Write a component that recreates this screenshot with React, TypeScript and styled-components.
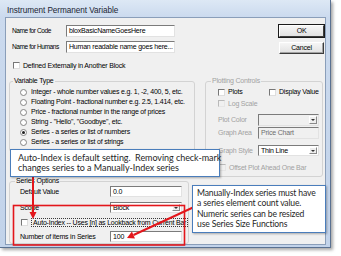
import React from 'react'
import styled, { createGlobalStyle } from 'styled-components'

const GlobalStyle = createGlobalStyle`
  html, body {
    margin: 0;
    padding: 0;
    background: #ffffff;
  }
  body {
    font-family: 'Liberation Sans', Arial, sans-serif;
  }
`

const Stage = styled.div`
  position: relative;
  width: 341px;
  height: 256px;
  overflow: hidden;
  background: #ffffff;
`

const Window = styled.div`
  width: 331px;
  height: 248px;
  box-sizing: border-box;
  display: flex;
  flex-direction: column;
  padding: 0 4px 2px 5px;
  background: linear-gradient(180deg, #dde8f5 0px, #cbdaee 17px, #c2d3ea 100%);
  border-right: 1px solid #5a7191;
  border-bottom: 1px solid #5a7191;
  box-shadow: 2px 2px 3px rgba(0, 0, 0, 0.35);
`

const TitleBar = styled.div`
  height: 17px;
  flex: none;
  display: flex;
  align-items: flex-end;
  padding: 0 0 2px 2px;
  box-sizing: border-box;
  font-size: 8.2px;
  line-height: 8px;
  letter-spacing: -0.05px;
  color: #1c2533;
`

const Client = styled.div`
  flex: 1;
  min-height: 0;
  overflow: hidden;
  border: 1px solid #8a9eb9;
  background: #f0f0f0;
  display: grid;
  grid-template-columns: 186px 119px;
  column-gap: 10px;
  align-content: start;
  align-items: start;
  padding: 7px 0 0 3px;
  font-size: 7px;
  line-height: 8px;
  letter-spacing: -0.2px;
  color: #000;
`

const NameFields = styled.div`
  display: flex;
  flex-direction: column;
  gap: 4px;
  padding-left: 3px;
`

const FieldRow = styled.div`
  display: grid;
  grid-template-columns: 54px 109px;
  align-items: center;
  height: 12px;
`

const NameLabel = styled.span`
  font-size: 6.6px;
  letter-spacing: -0.45px;
`

const TextBox = styled.div<{ $h?: number; $w?: number; $muted?: boolean }>`
  height: ${({ $h }) => $h || 12}px;
  width: ${({ $w }) => ($w ? `${$w}px` : 'auto')};
  box-sizing: border-box;
  border: 1px solid;
  border-color: #7b7b7b #e2e2e2 #e2e2e2 #7b7b7b;
  background: ${({ $muted }) => ($muted ? '#f0f0f0' : '#ffffff')};
  color: ${({ $muted }) => ($muted ? '#6f6f6f' : '#000')};
  padding: 0 2px;
  display: flex;
  align-items: center;
  white-space: nowrap;
  overflow: hidden;
`

const ButtonStack = styled.div`
  display: flex;
  flex-direction: column;
  align-items: flex-end;
  gap: 5px;
`

const PushButton = styled.button<{ $default?: boolean }>`
  width: 45px;
  height: 12px;
  margin: 0;
  padding: 0;
  font: inherit;
  font-size: 7px;
  letter-spacing: -0.2px;
  color: #000;
  background: linear-gradient(180deg, #f6f6f6, #e1e1e1);
  border: 1px solid;
  border-color: #ffffff #3c3c3c #3c3c3c #ffffff;
  box-shadow: ${({ $default }) => ($default ? '0 0 0 1px #1b1b1b' : 'inset -1px -1px 0 #a3a3a3')};
`

const CheckLine = styled.div<{ $mt?: number; $pl?: number; $muted?: boolean; $span?: boolean }>`
  display: flex;
  align-items: center;
  gap: 3px;
  height: 9px;
  margin-top: ${({ $mt }) => $mt || 0}px;
  padding-left: ${({ $pl }) => $pl || 0}px;
  grid-column: ${({ $span }) => ($span ? '1 / -1' : 'auto')};
  color: ${({ $muted }) => ($muted ? '#a2a2a2' : '#000')};
  white-space: nowrap;
`

const CheckBox = styled.span<{ $disabled?: boolean }>`
  width: 7px;
  height: 7px;
  flex: none;
  box-sizing: border-box;
  border: 1px solid;
  border-color: ${({ $disabled }) => ($disabled ? '#b9b9b9 #e6e6e6 #e6e6e6 #b9b9b9' : '#777 #dedede #dedede #777')};
  background: ${({ $disabled }) => ($disabled ? '#f0f0f0' : '#ffffff')};
`

const Group = styled.fieldset<{ $w: number; $mt?: number }>`
  width: ${({ $w }) => $w}px;
  margin: ${({ $mt }) => $mt || 0}px 0 0 0;
  padding: 0;
  min-width: 0;
  box-sizing: border-box;
  border: 1px solid #d3d3d3;
  border-radius: 3px;
`

const GroupLegend = styled.legend<{ $ml: number; $muted?: boolean }>`
  padding: 0 1px;
  margin-left: ${({ $ml }) => $ml}px;
  font-size: 7px;
  line-height: 8px;
  color: ${({ $muted }) => ($muted ? '#a2a2a2' : '#000')};
`

const GroupBody = styled.div<{ $pad: string }>`
  display: flex;
  flex-direction: column;
  padding: ${({ $pad }) => $pad};
`

const RadioRow = styled.div`
  display: flex;
  align-items: center;
  gap: 4px;
  height: 10px;
  white-space: nowrap;
`

const Radio = styled.span<{ $on?: boolean }>`
  width: 7px;
  height: 7px;
  flex: none;
  box-sizing: border-box;
  border-radius: 50%;
  border: 1px solid #858585;
  background: #ffffff;
  display: flex;
  align-items: center;
  justify-content: center;

  &::after {
    content: '';
    width: 3px;
    height: 3px;
    border-radius: 50%;
    background: ${({ $on }) => ($on ? '#1e1e1e' : 'transparent')};
  }
`

const PlotPair = styled.div`
  display: grid;
  grid-template-columns: 51px auto;
  height: 10px;
  align-items: center;
`

const ControlRow = styled.div<{ $mt?: number; $label: number; $h?: number }>`
  display: grid;
  grid-template-columns: ${({ $label }) => $label}px auto;
  align-items: center;
  height: ${({ $h }) => $h || 11}px;
  margin-top: ${({ $mt }) => $mt || 0}px;
  white-space: nowrap;
`

const FieldLabel = styled.span<{ $muted?: boolean }>`
  color: ${({ $muted }) => ($muted ? '#a2a2a2' : '#000')};
`

const Combo = styled.div<{ $w: number; $h?: number; $disabled?: boolean }>`
  width: ${({ $w }) => $w}px;
  height: ${({ $h }) => $h || 11}px;
  box-sizing: border-box;
  display: flex;
  align-items: stretch;
  border: 1px solid;
  border-color: #7b7b7b #e2e2e2 #e2e2e2 #7b7b7b;
  background: ${({ $disabled }) => ($disabled ? '#f0f0f0' : '#ffffff')};
`

const ComboText = styled.span`
  flex: 1;
  padding-left: 2px;
  display: flex;
  align-items: center;
  overflow: hidden;
`

const DropButton = styled.span`
  width: 8px;
  flex: none;
  box-sizing: border-box;
  margin: 1px;
  background: #eeeeee;
  border: 1px solid;
  border-color: #ffffff #8a8a8a #8a8a8a #ffffff;
  display: flex;
  align-items: center;
  justify-content: center;

  &::after {
    content: '';
    border-left: 2px solid transparent;
    border-right: 2px solid transparent;
    border-top: 2px solid #333;
  }
`

const FocusText = styled.span`
  border: 1px dotted #3a3a3a;
  padding: 0 1px;
  line-height: 7px;
`

const Callout = styled.div`
  position: absolute;
  box-sizing: border-box;
  background: #ffffff;
  border: 1.5px solid #4a7dbb;
  box-shadow: 1px 1px 2px rgba(0, 0, 0, 0.3);
  font-family: Lato, 'Liberation Sans', sans-serif;
  font-size: 9px;
  line-height: 10px;
  color: #262626;
  white-space: nowrap;
`

const AutoIndexNote = styled(Callout)`
  left: 10px;
  top: 149px;
  width: 210px;
  height: 28px;
  padding: 3px 0 0 7px;
  letter-spacing: -0.05px;
`

const ManualIndexNote = styled(Callout)`
  left: 192px;
  top: 185px;
  width: 134px;
  height: 48px;
  padding: 2px 0 0 4px;
  font-size: 8.6px;
  line-height: 10.3px;
  letter-spacing: -0.15px;
`

const Annotations = styled.svg`
  position: absolute;
  left: 0;
  top: 0;
  width: 341px;
  height: 256px;
  pointer-events: none;
`

const variableTypes = [
  'Integer - whole number values e.g. 1, -2, 400, 5, etc.',
  'Floating Point - fractional number e.g. 2.5, 1.414, etc.',
  'Price - fractional number in the range of prices',
  'String - "Hello", "Goodbye", etc.',
  'Series - a series or list of numbers',
  'Series - a series or list of strings',
]

export default function App() {
  return (
    <Stage>
      <GlobalStyle />
      <Window>
        <TitleBar>Instrument Permanent Variable</TitleBar>
        <Client>
          <NameFields>
            <FieldRow>
              <NameLabel>Name for Code</NameLabel>
              <TextBox>bloxBasicNameGoesHere</TextBox>
            </FieldRow>
            <FieldRow>
              <NameLabel>Name for Humans</NameLabel>
              <TextBox>Human readable name goes here...</TextBox>
            </FieldRow>
          </NameFields>
          <ButtonStack>
            <PushButton $default>OK</PushButton>
            <PushButton>Cancel</PushButton>
          </ButtonStack>

          <CheckLine $mt={7} $pl={4} $span>
            <CheckBox />
            Defined Externally in Another Block
          </CheckLine>

          <Group $w={186} $mt={7}>
            <GroupLegend $ml={3}>Variable Type</GroupLegend>
            <GroupBody $pad="2px 0 4px 10px">
              {variableTypes.map((label, i) => (
                <RadioRow key={label}>
                  <Radio $on={i === 4} />
                  {label}
                </RadioRow>
              ))}
            </GroupBody>
          </Group>

          <Group $w={118} $mt={7}>
            <GroupLegend $ml={5} $muted>
              Plotting Controls
            </GroupLegend>
            <GroupBody $pad="2px 5px 4px 12px">
              <PlotPair>
                <CheckLine>
                  <CheckBox />
                  Plots
                </CheckLine>
                <CheckLine>
                  <CheckBox />
                  Display Value
                </CheckLine>
              </PlotPair>
              <CheckLine $mt={2} $muted>
                <CheckBox $disabled />
                Log Scale
              </CheckLine>
              <ControlRow $mt={6} $label={40} $h={12}>
                <FieldLabel $muted>Plot Color</FieldLabel>
                <Combo $w={61} $h={12} $disabled>
                  <ComboText />
                  <DropButton />
                </Combo>
              </ControlRow>
              <ControlRow $mt={1} $label={40} $h={12}>
                <FieldLabel $muted>Graph Area</FieldLabel>
                <TextBox $w={61} $muted>
                  Price Chart
                </TextBox>
              </ControlRow>
              <ControlRow $mt={6} $label={40}>
                <FieldLabel $muted>Graph Style</FieldLabel>
                <Combo $w={61}>
                  <ComboText>Thin Line</ComboText>
                  <DropButton />
                </Combo>
              </ControlRow>
              <CheckLine $mt={7} $pl={1} $muted>
                <CheckBox $disabled />
                Offset Plot Ahead One Bar
              </CheckLine>
            </GroupBody>
          </Group>

          <Group $w={180}>
            <GroupLegend $ml={5}>Series Options</GroupLegend>
            <GroupBody $pad="1px 0 1px 10px">
              <ControlRow $label={90}>
                <FieldLabel>Default Value</FieldLabel>
                <TextBox $w={72} $h={11}>
                  0.0
                </TextBox>
              </ControlRow>
              <ControlRow $mt={5} $label={90}>
                <FieldLabel>Scope</FieldLabel>
                <Combo $w={72}>
                  <ComboText>Block</ComboText>
                  <DropButton />
                </Combo>
              </ControlRow>
              <CheckLine $mt={5} $pl={1}>
                <CheckBox />
                <FocusText>Auto-Index -- Uses [n] as Lookback from Current Bar</FocusText>
              </CheckLine>
              <ControlRow $mt={4} $label={90}>
                <FieldLabel>Number of items in Series</FieldLabel>
                <TextBox $w={72} $h={11}>
                  100
                </TextBox>
              </ControlRow>
            </GroupBody>
          </Group>
        </Client>
      </Window>

      <Annotations viewBox="0 0 341 256">
        <rect x="13.5" y="205.5" width="171" height="39.5" fill="none" stroke="#e3161b" strokeWidth="1.6" />
        <line x1="33" y1="176" x2="33" y2="213" stroke="#e3161b" strokeWidth="2" />
        <polygon points="29.5,212 36.5,212 33,219" fill="#e3161b" />
        <line x1="194" y1="207" x2="133.5" y2="235" stroke="#e3161b" strokeWidth="2" />
        <polygon points="127,238 135,238.4 131.9,231.6" fill="#e3161b" />
      </Annotations>

      <AutoIndexNote>
        Auto-Index is default setting.&nbsp; Removing check-mark
        <br />
        changes series to a Manually-Index series
      </AutoIndexNote>
      <ManualIndexNote>
        Manually-Index series must have
        <br />
        a series element count value.
        <br />
        Numeric series can be resized
        <br />
        use Series Size Functions
      </ManualIndexNote>
    </Stage>
  )
}
